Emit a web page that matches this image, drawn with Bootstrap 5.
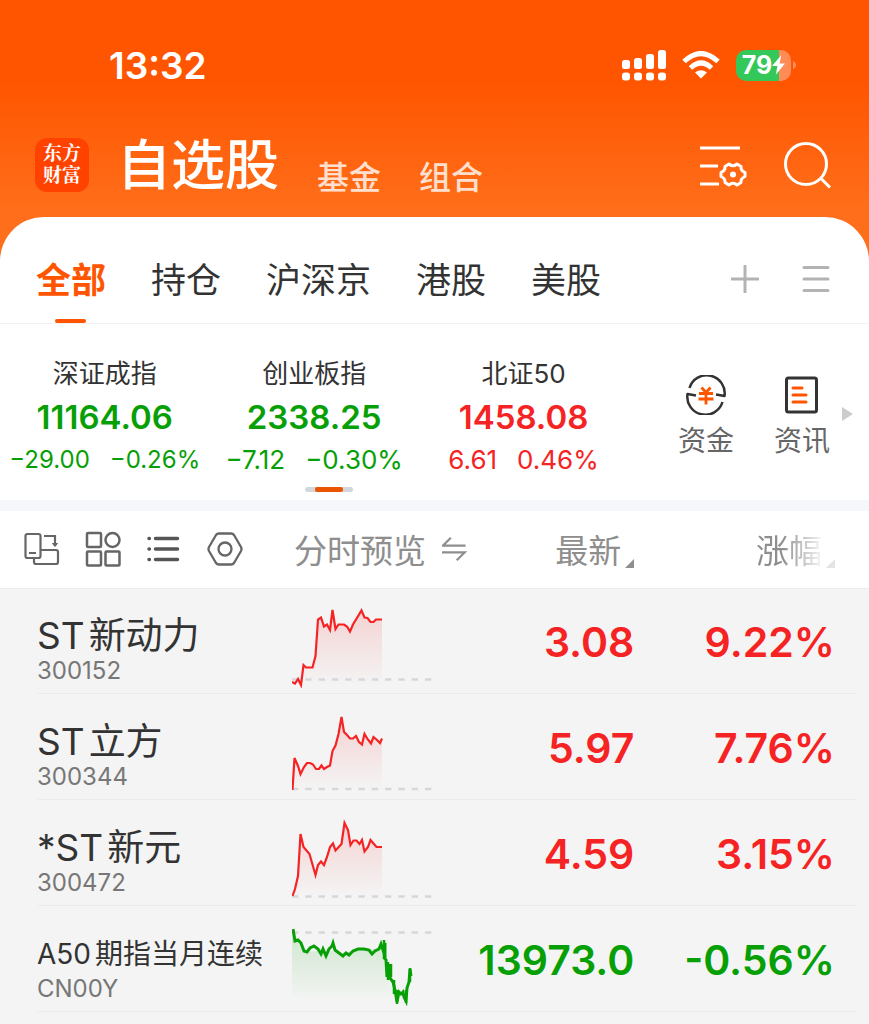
<!DOCTYPE html>
<html lang="zh-CN">
<head>
<meta charset="utf-8">
<meta name="viewport" content="width=device-width, initial-scale=1">
<title>自选股</title>
<link href="https://cdn.jsdelivr.net/npm/bootstrap@5.3.0/dist/css/bootstrap.min.css" rel="stylesheet">
<style>
:root{--up:#f52323;--down:#06a006;--brand:#ff5500}
body{background:#f4f4f4;color:#333;font-family:Inter,"Noto Sans CJK SC",sans-serif;line-height:1}
button{border:0;background:none;padding:0;color:inherit;line-height:1}
a{color:inherit;text-decoration:none}
svg{display:block}
.up{color:var(--up)}
.down{color:var(--down)}
.hero{background:linear-gradient(#ff5500 0,#ff5500 80px,#ff6e1a 210px)}
.status{height:130px;padding:0 73px 0 109px;color:#fff}
.clock{font-size:37px;font-weight:600}
.battery{width:55px;height:31px;border-radius:10px;background:linear-gradient(90deg,#34c759 79%,#ff8b57 79%);font-size:25px;font-weight:700}
.titlebar{height:87px;padding:0 36px 0 35px;color:#fff}
.logo{width:54px;height:54px;padding-top:5px;border-radius:12px;background:#ff4200;font-family:"Liberation Serif","Noto Serif CJK SC","Noto Sans CJK SC",serif;font-size:19px;font-weight:700;line-height:22px}
.title-links{gap:38px;margin-top:4px}
.title-main{font-size:54px;font-weight:500;line-height:64px}
.title-sub{font-size:32px;line-height:40px;color:#ffe0cf;font-weight:500}
.sheet{background:#fff;border-radius:44px 44px 0 0}
.tabs{height:107px;padding:0 39px 0 36px;border-bottom:1px solid #f2f2f2;gap:45px}
.tab-item{font-size:35px;height:106px;line-height:106px;padding-top:10px}
.tab-item.active{color:var(--brand);font-weight:700}
.tab-item.active::after{content:"";position:absolute;left:50%;bottom:0;width:31px;height:4px;margin-left:-16px;border-radius:2px;background:var(--brand)}
.tab-tools{gap:43px;padding-top:18px}
.strip{height:176px}
.quote{flex:0 0 24.1%;padding-top:34px;white-space:nowrap}
.q-name{font-size:26px;line-height:32px}
.q-value{font-size:33px;line-height:40px;font-weight:600;margin-top:7px}
.q-delta{font-size:26px;line-height:30px;margin-top:8px;gap:20px}
.q-delta.long{font-size:24px}
.shortcut{font-size:28px;line-height:36px;color:#666;padding-top:10px}
.pager{left:35.1%;bottom:8px;width:48px;height:5px;border-radius:3px;background:#d3d6dc}
.pager span{width:28px;height:5px;border-radius:2px;background:#ea5504}
.divide{height:11px;background:#f6f7fa}
.stocks{table-layout:fixed;width:100%}
.stocks th,.stocks td{padding:0;vertical-align:middle;white-space:nowrap}
.stocks thead{background:#fff;border-bottom:1px solid #ececec;color:#8e8e8e}
.stocks thead th{height:77px;font-size:33px;font-weight:400}
.head-label{padding:4px 0 0 2px}
.tools{gap:25px}
.stocks tbody tr{height:106px;background:linear-gradient(#ebebeb,#ebebeb) 38px 100%/calc(100% - 50px) 1px no-repeat}
.stocks tbody th{padding:16px 0 0 37px;font-weight:400}
.stocks tbody .s-chart{padding-top:10px}
.stocks tbody .s-num{padding-top:2px}
.stocks th:last-child,.stocks td:last-child{padding-right:34px}
.s-name{font-size:37px;line-height:44px}
.s-name.compact{font-size:28px}
.s-code{font-size:24px;line-height:26px;color:#777}
.s-num{font-size:41px;font-weight:600;line-height:50px}
.fade-out{background:linear-gradient(90deg,#8e8e8e 40%,#fff 105%);-webkit-background-clip:text;background-clip:text;color:transparent}
</style>
</head>
<body>
<div class="hero">
  <div class="status d-flex align-items-center justify-content-between">
    <div class="clock">13:32</div>
    <div class="d-flex align-items-center">
      <svg width="44" height="31" viewBox="0 0 44 31" fill="#fff" aria-hidden="true"><rect y="10" width="8" height="9" rx="2.500"/><rect x="12" y="8" width="8" height="11" rx="2.500"/><rect x="24" y="4" width="8" height="15" rx="2.500"/><rect x="36" width="8" height="19" rx="2.500"/><rect y="22.500" width="8" height="8" rx="3"/><rect x="12" y="22.500" width="8" height="8" rx="3"/><rect x="24" y="22.500" width="8" height="8" rx="3"/><rect x="36" y="22.500" width="8" height="8" rx="3"/></svg>
      <svg class="ms-3" width="38" height="28" viewBox="0 0 38 28" aria-hidden="true"><g fill="none" stroke="#fff" stroke-width="5"><path d="M2 10.500Q19-5.500 36 10.500"/><path d="M8.500 17Q19 7 29.500 17"/></g><path d="M13 21.500Q19 17 25 21.500L19 27.500Z" fill="#fff"/></svg>
      <div class="battery ms-3 d-flex align-items-center justify-content-center">79<svg width="13" height="20" viewBox="0 0 12 18" fill="#fff" aria-hidden="true"><path d="M8.500 0L0 10h5L3.500 18 12 7.500H7Z"/></svg></div>
      <svg width="5" height="10" viewBox="0 0 5 10" aria-hidden="true"><path d="M2 1q3 1 3 4t-3 4z" fill="#ff8b57"/></svg>
    </div>
  </div>
  <header class="titlebar d-flex align-items-start">
    <div class="logo text-center mt-2">东方<br>财富</div>
    <nav class="title-links d-flex align-items-end ms-4 ps-1">
      <a href="#" class="title-main">自选股</a>
      <a href="#" class="title-sub">基金</a>
      <a href="#" class="title-sub">组合</a>
    </nav>
    <div class="d-flex align-items-center ms-auto mt-2">
      <button aria-label="设置"><svg width="48" height="54" viewBox="0 0 48 54" fill="none" stroke="#fff" stroke-width="3"><path d="M1 10h40M1 28h18M1 46h19"/><path stroke-linejoin="round" d="M30 26Q34 29.500 38 26L42 28.500Q41.500 32.500 46 34.500V38.500Q41.500 40.500 42 44.500L38 47Q34 43.500 30 47L26 44.500Q26.500 40.500 22 38.500V34.500Q26.500 32.500 26 28.500Z"/><circle cx="34" cy="36.500" r="3" fill="#fff" stroke="none"/></svg></button>
      <button class="ms-4 ps-2" aria-label="搜索"><svg width="54" height="54" viewBox="0 0 54 54" fill="none" stroke="#fff" stroke-width="3"><circle cx="27" cy="26" r="20.500"/><path d="M41 39.500l10 10"/></svg></button>
    </div>
  </header>
  <div class="sheet">
    <nav class="tabs d-flex">
      <a href="#" class="tab-item active position-relative">全部</a>
      <a href="#" class="tab-item">持仓</a>
      <a href="#" class="tab-item">沪深京</a>
      <a href="#" class="tab-item">港股</a>
      <a href="#" class="tab-item">美股</a>
      <div class="tab-tools d-flex align-items-center ms-auto">
        <button aria-label="添加"><svg width="28" height="28" viewBox="0 0 28 28" stroke="#b3b3b3" stroke-width="3" stroke-linecap="round"><path d="M14 1v26M1 14h26"/></svg></button>
        <button aria-label="菜单"><svg width="28" height="28" viewBox="0 0 28 28" stroke="#b3b3b3" stroke-width="3" stroke-linecap="round"><path d="M2 2.500h24M2 14h24M2 25.500h24"/></svg></button>
      </div>
    </nav>
    <section class="strip d-flex position-relative">
      <div class="quote text-center"><div class="q-name">深证成指</div><div class="q-value down">11164.06</div><div class="q-delta long down d-flex justify-content-center"><span>−29.00</span><span>−0.26%</span></div></div>
      <div class="quote text-center"><div class="q-name">创业板指</div><div class="q-value down">2338.25</div><div class="q-delta down d-flex justify-content-center"><span>−7.12</span><span>−0.30%</span></div></div>
      <div class="quote text-center"><div class="q-name">北证50</div><div class="q-value up">1458.08</div><div class="q-delta up d-flex justify-content-center"><span>6.61</span><span>0.46%</span></div></div>
      <div class="d-flex flex-fill align-items-center justify-content-end pe-3">
        <a href="#" class="shortcut d-flex flex-column align-items-center"><svg width="40" height="40" viewBox="0 0 40 40" fill="none" stroke="#333" stroke-width="2.500" stroke-linejoin="round" aria-hidden="true"><path d="M3.500 13A18 18 0 0 1 38.500 21L30 19.500M36.500 27A18 18 0 0 1 1.500 19L10 20.500"/><path d="M15.500 12.500l4.500 5 4.500-5M13 18.500h14M12.500 24h15M20 18v11.500" stroke="#ff5500" stroke-width="2.800"/></svg><span class="mt-2">资金</span></a>
        <a href="#" class="shortcut d-flex flex-column align-items-center ms-4 me-2 ps-3"><svg width="40" height="40" viewBox="0 0 40 40" fill="none" aria-hidden="true"><rect x="4.500" y="3" width="30" height="34" rx="2" stroke="#333" stroke-width="3"/><path d="M11 13h9M11 20h13M11 27h13" stroke="#ff5500" stroke-width="3" stroke-linecap="round"/></svg><span class="mt-2">资讯</span></a>
        <svg class="ms-1 mt-1" width="11" height="14" viewBox="0 0 11 14" fill="#ccc" aria-hidden="true"><path d="M0 0l11 7-11 7z"/></svg>
      </div>
      <div class="pager position-absolute d-flex justify-content-center"><span></span></div>
    </section>
  </div>
</div>
<div class="divide"></div>
<table class="stocks">
  <colgroup><col style="width:33.6%"><col style="width:20.2%"><col style="width:19.2%"><col style="width:27%"></colgroup>
  <thead>
    <tr>
      <th scope="col">
        <div class="tools d-flex ps-4">
          <button aria-label="横屏"><svg width="36" height="36" viewBox="0 0 36 36" fill="none" stroke="#666" stroke-width="2.200"><rect x="1.500" y="3" width="15" height="24" rx="2"/><path d="M5 22h7M10 27v4q0 2 2 2h20q2 0 2-2V21q0-2-2-2H17M20 5h11v10"/><path d="M28.500 12.500h5L31 15.500z" fill="#666" stroke-width="1"/></svg></button>
          <button aria-label="宫格"><svg width="36" height="36" viewBox="0 0 36 36" fill="none" stroke="#666" stroke-width="2.500"><rect x="2" y="2" width="14" height="14" rx="1"/><circle cx="27.500" cy="9" r="7"/><rect x="2" y="20.500" width="14" height="14" rx="1"/><rect x="20.500" y="20.500" width="14" height="14" rx="1"/></svg></button>
          <button aria-label="列表"><svg width="36" height="36" viewBox="0 0 36 36" fill="none" stroke="#555" stroke-width="3.500" stroke-linecap="round"><path d="M9.500 7.500h22M9.500 18h22M9.500 28.500h22M3 7.500h.4M3 18h.4M3 28.500h.4"/></svg></button>
          <button aria-label="选项"><svg width="36" height="36" viewBox="0 0 36 36" fill="none" stroke="#666" stroke-width="2.300" stroke-linejoin="round"><path d="M12 2.500H24Q26 2.500 27 4L34 16Q35 18 34 20L27 32Q26 33.500 24 33.500H12Q10 33.500 9 32L2 20Q1 18 2 16L9 4Q10 2.500 12 2.500Z"/><circle cx="18" cy="18" r="6.500"/></svg></button>
        </div>
      </th>
      <th scope="col"><div class="head-label d-flex align-items-center">分时预览<svg class="ms-3 mb-1" width="26" height="26" viewBox="0 0 26 26" fill="none" stroke="#8e8e8e" stroke-width="2.300"><path d="M24 9.500H1L9 1.500M0 16.500H23L15 24.500"/></svg></div></th>
      <th scope="col"><div class="head-label d-flex align-items-end justify-content-end">最新<svg class="ms-1" width="9" height="9" viewBox="0 0 9 9" fill="#8e8e8e" aria-hidden="true"><path d="M9 0v9H0z"/></svg></div></th>
      <th scope="col"><div class="head-label d-flex align-items-end justify-content-end"><span class="fade-out">涨幅</span><svg class="ms-1" width="9" height="9" viewBox="0 0 9 9" fill="#e4e4e4" aria-hidden="true"><path d="M9 0v9H0z"/></svg></div></th>
    </tr>
  </thead>
  <tbody>
    <tr>
      <th scope="row"><div class="s-name"><span class="me-1">ST</span>新动力</div><div class="s-code">300152</div></th>
      <td class="s-chart"><svg width="141" height="84" viewBox="0 0 141 84" fill="none" aria-hidden="true"><defs><linearGradient id="gu" x1="0" y1="0" x2="0" y2="1"><stop stop-color="#f52323" stop-opacity=".16"/><stop offset="1" stop-color="#f52323" stop-opacity="0"/></linearGradient><linearGradient id="gd" x1="0" y1="0" x2="0" y2="1"><stop stop-color="#06a006" stop-opacity=".16"/><stop offset="1" stop-color="#06a006" stop-opacity="0"/></linearGradient></defs><path d="M0 78L3 79.500 6 75 9 81 11.500 61 14 63.500 20.500 63.500 23.500 52 26 15.500 29 13.500 32 22.500 35 20.500 38 26 40.500 6 43.500 25 46.500 20.500 52 20.500 55 22.500 58 27.500 61 20.500 69.500 6.500 72.500 13.500 75.500 14 78.500 18 81.500 18 84 15.500H90V80H0z" fill="url(#gu)"/><path d="M0 75.500h141" stroke="#d6d6dc" stroke-width="2.500" stroke-dasharray="6.300 7"/><path d="M0 78L3 79.500 6 75 9 81 11.500 61 14 63.500 20.500 63.500 23.500 52 26 15.500 29 13.500 32 22.500 35 20.500 38 26 40.500 6 43.500 25 46.500 20.500 52 20.500 55 22.500 58 27.500 61 20.500 69.500 6.500 72.500 13.500 75.500 14 78.500 18 81.500 18 84 15.500H90" stroke="#f52323" stroke-width="2.200"/></svg></td>
      <td class="text-end s-num up">3.08</td><td class="text-end s-num up">9.22%</td>
    </tr>
    <tr>
      <th scope="row"><div class="s-name"><span class="me-1">ST</span>立方</div><div class="s-code">300344</div></th>
      <td class="s-chart"><svg width="141" height="84" viewBox="0 0 141 84" fill="none" aria-hidden="true"><path d="M.5 80L2.500 48 6 56 8.500 64 12 57 15 53H18L21 54.500 24 59H27L29.500 55.500 32 59 35 57 38 55.500 40.500 41 43.500 35.500 46.500 24 49.500 7 52 22 55 25 58 28.500H61L64 26 67 32 70 34.500 72.500 24 75.500 29 79 33.500 81.500 27 85 30 88 33 90 28.500V80z" fill="url(#gu)"/><path d="M0 79h141" stroke="#d6d6dc" stroke-width="2.500" stroke-dasharray="6.300 7"/><path d="M.5 80L2.500 48 6 56 8.500 64 12 57 15 53H18L21 54.500 24 59H27L29.500 55.500 32 59 35 57 38 55.500 40.500 41 43.500 35.500 46.500 24 49.500 7 52 22 55 25 58 28.500H61L64 26 67 32 70 34.500 72.500 24 75.500 29 79 33.500 81.500 27 85 30 88 33 90 28.500" stroke="#f52323" stroke-width="2.200"/></svg></td>
      <td class="text-end s-num up">5.97</td><td class="text-end s-num up">7.76%</td>
    </tr>
    <tr>
      <th scope="row"><div class="s-name"><span class="me-1">*ST</span>新元</div><div class="s-code">300472</div></th>
      <td class="s-chart"><svg width="141" height="84" viewBox="0 0 141 84" fill="none" aria-hidden="true"><path d="M.5 80L3 73 6 60 8.500 18 11.500 31 17.500 38 23.500 59 26 49 29 45.500 32 49 35 41 38 31 41 27.500 43.500 34.500 49.500 28 52.500 7 56 14 58.500 29 61.500 24.500H64.500L67.500 28 70 24 72.500 35.500 76 31 78.500 24 81.500 27.500 84.500 31H90V80z" fill="url(#gu)"/><path d="M0 80.500h141" stroke="#d6d6dc" stroke-width="2.500" stroke-dasharray="6.300 7"/><path d="M.5 80L3 73 6 60 8.500 18 11.500 31 17.500 38 23.500 59 26 49 29 45.500 32 49 35 41 38 31 41 27.500 43.500 34.500 49.500 28 52.500 7 56 14 58.500 29 61.500 24.500H64.500L67.500 28 70 24 72.500 35.500 76 31 78.500 24 81.500 27.500 84.500 31H90" stroke="#f52323" stroke-width="2.200"/></svg></td>
      <td class="text-end s-num up">4.59</td><td class="text-end s-num up">3.15%</td>
    </tr>
    <tr>
      <th scope="row"><div class="s-name compact"><span class="me-1">A50</span>期指当月连续</div><div class="s-code">CN00Y</div></th>
      <td class="s-chart"><svg width="141" height="84" viewBox="0 0 141 84" fill="none" aria-hidden="true"><path d="M0 8L13 30 36 28 49 31 68 28 90 26 93 42 97 58 105 80H0z" fill="url(#gd)"/><path d="M0 10.500h141" stroke="#d6d6dc" stroke-width="2.500" stroke-dasharray="6.300 7"/><path d="M1 7L3 19 6 18 9 21 12 29 15 30 18 26 22 24 26 27 29 32 31 27 34 34 37 27 40 24 41 21 43 28 47 31 51 34 54 31 57 33 61 29 66 27 72 27 77 28 80 32 83 29 87 27 89 22 91 28 93 21 93 37 94 38 95 55 97 42 98 56 101 60 103 68 105 80 107 70 109 72 111 70 112 75 114 79 115 66 117 60 118 47 119 54" stroke="#06a006" stroke-width="3"/><path d="M92 18V37M96 40V58M99 42V55M102 58V72M105 68V82M114 68V81M118 46V60" stroke="#06a006" stroke-width="2.500"/></svg></td>
      <td class="text-end s-num down">13973.0</td><td class="text-end s-num down">-0.56%</td>
    </tr>
  </tbody>
</table>
<script src="https://cdn.jsdelivr.net/npm/bootstrap@5.3.0/dist/js/bootstrap.bundle.min.js"></script>
</body>
</html>
